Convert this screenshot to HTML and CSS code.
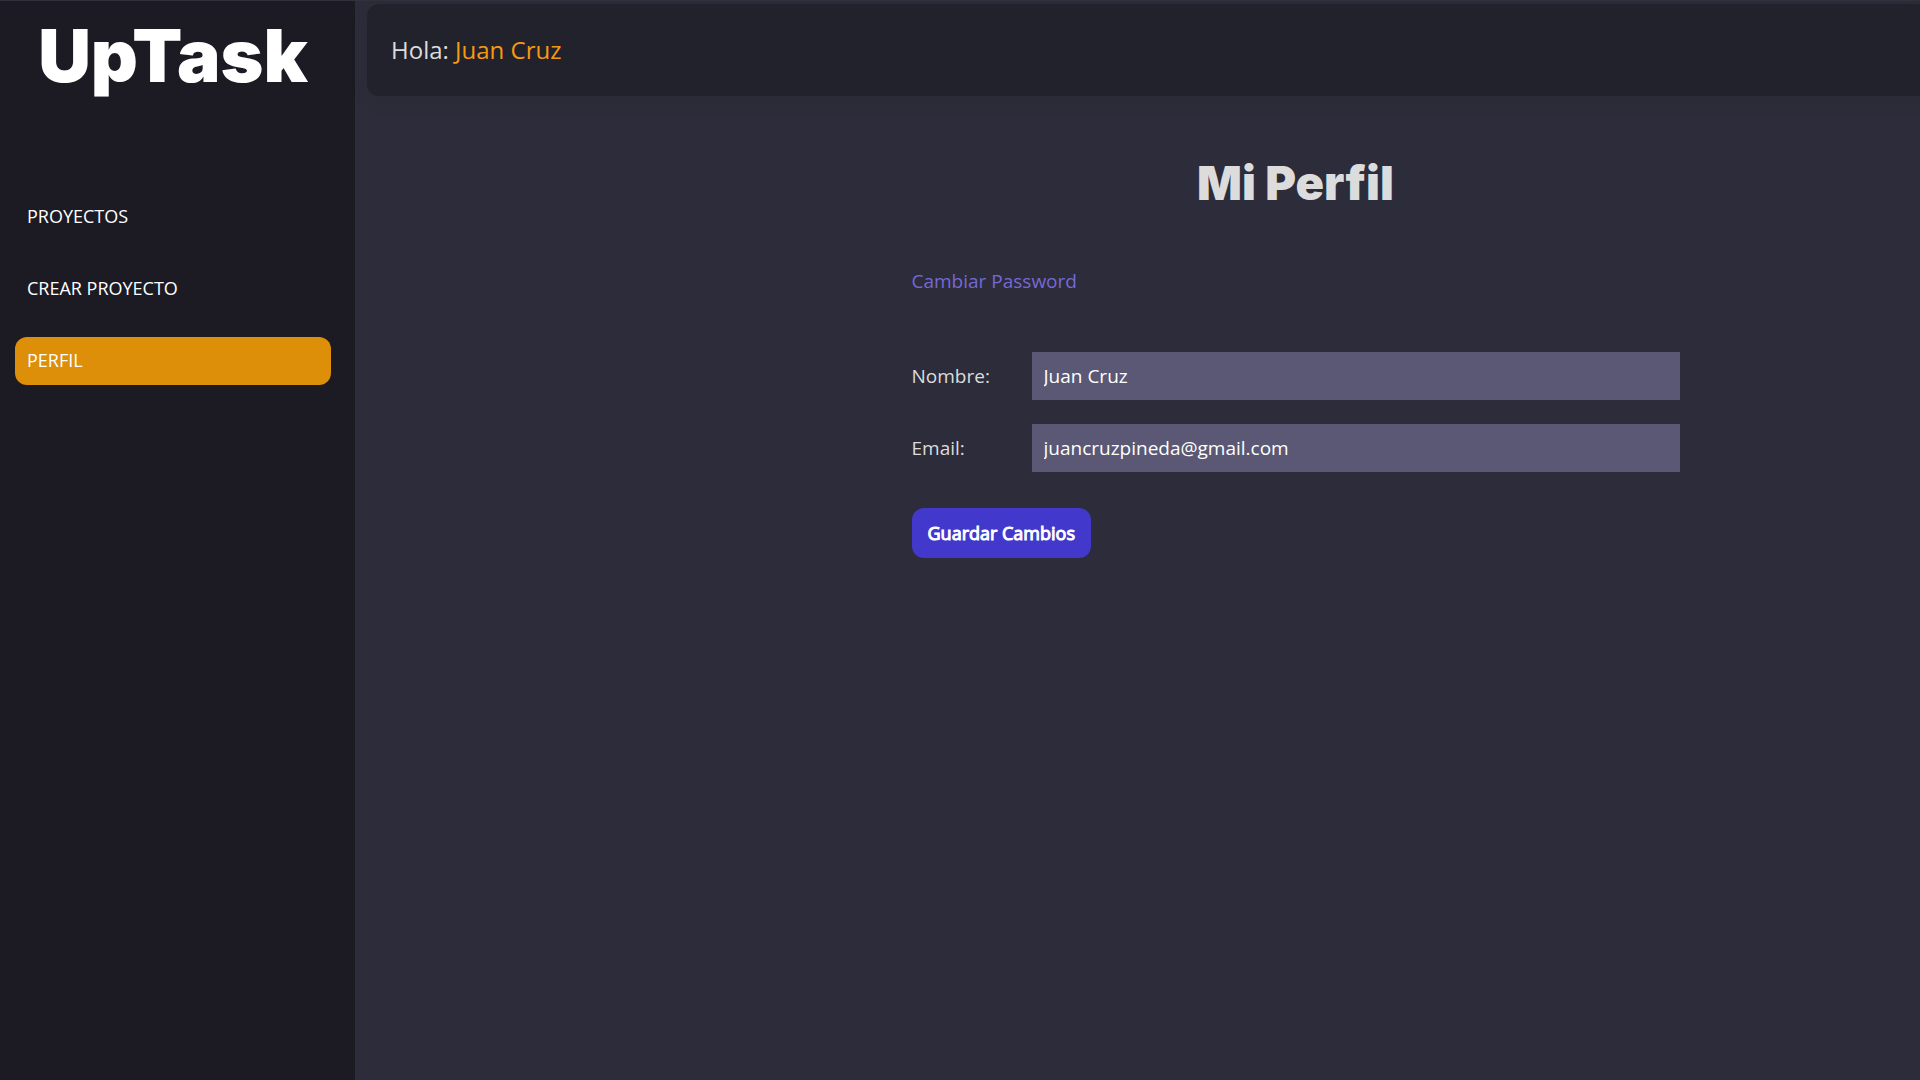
FILE: index.html
```html
<!DOCTYPE html>
<html lang="es">
<head>
  <meta charset="utf-8">
  <meta name="viewport" content="width=device-width, initial-scale=1">
  <title>UpTask</title>
  <link rel="stylesheet" href="styles.css">
</head>
<body>
  <div class="dashboard">
    <aside class="sidebar">
      <h2 class="logo">UpTask</h2>
      <nav class="nav">
        <a class="nav-link" href="#">Proyectos</a>
        <a class="nav-link" href="#">Crear Proyecto</a>
        <a class="nav-link active" href="#">Perfil</a>
      </nav>
    </aside>
    <div class="main">
      <header class="bar">
        <p class="greeting">Hola: <span class="user">Juan Cruz</span></p>
      </header>
      <main class="content">
        <h1 class="title">Mi Perfil</h1>
        <div class="panel">
          <a class="link" href="#">Cambiar Password</a>
          <form class="form">
            <div class="field">
              <label for="nombre">Nombre:</label>
              <input class="input" id="nombre" type="text" value="Juan Cruz">
            </div>
            <div class="field">
              <label for="email">Email:</label>
              <input class="input" id="email" type="email" value="juancruzpineda@gmail.com">
            </div>
            <button class="submit" type="submit">Guardar Cambios</button>
          </form>
        </div>
      </main>
    </div>
  </div>
</body>
</html>
```
FILE: styles.css
```css
*,
*::before,
*::after {
  box-sizing: border-box;
}

body {
  margin: 0;
  background: #2d2c3a;
  color: #dcdcdc;
  font-family: "Open Sans", sans-serif;
  font-size: 19px;
  line-height: 36px;
}

h1,
h2,
p {
  margin: 0;
}

a {
  text-decoration: none;
}

.dashboard {
  display: flex;
  min-height: 100vh;
  border-top: 1px solid #32313d;
}

.sidebar {
  flex: 0 0 355px;
  padding: 11px 24px 24px 15px;
  background: #1c1b24;
}

.logo {
  color: #fff;
  font-family: Inter, sans-serif;
  font-size: 73px;
  font-weight: 900;
  line-height: 88px;
  text-align: center;
}

.nav {
  display: flex;
  flex-direction: column;
  gap: 24px;
  margin-top: 93px;
}

.nav-link {
  padding: 5px 12px 7px;
  border-radius: 12px;
  color: #fff;
  font-size: 18px;
  text-transform: uppercase;
}

.nav-link.active {
  background: #dd8f0a;
}

.main {
  flex: 1;
  min-width: 0;
  padding: 3px 0 24px 12px;
}

.bar {
  padding: 28px 24px;
  border-radius: 12px 0 0 12px;
  background: #22222d;
  box-shadow: 0 4px 16px rgba(34, 40, 34, 0.2);
}

.greeting {
  font-size: 24px;
}

.user {
  color: #f59a10;
}

.content {
  padding: 48px 0 0 304px;
}

.title {
  color: #dcdcdc;
  font-family: Inter, sans-serif;
  font-size: 47px;
  font-weight: 900;
  line-height: 78px;
  text-align: center;
}

.panel {
  max-width: 768px;
  margin: 41px auto 0;
}

.link {
  color: #7569d6;
}

.form {
  display: flex;
  flex-direction: column;
  align-items: flex-start;
  gap: 24px;
  margin-top: 53px;
}

.field {
  display: flex;
  align-items: center;
  width: 100%;
}

.field label {
  flex: 0 0 120px;
}

.input {
  flex: 1;
  min-width: 0;
  height: 48px;
  padding: 0 12px;
  border: 0;
  background: #5a5875;
  color: #fff;
  font: inherit;
}

.submit {
  margin-top: 12px;
  padding: 7px 16px;
  border: 0;
  border-radius: 12px;
  background: #4338cc;
  color: #fff;
  font: inherit;
  font-size: 18px;
  -webkit-text-stroke: 1px #fff;
}
```
